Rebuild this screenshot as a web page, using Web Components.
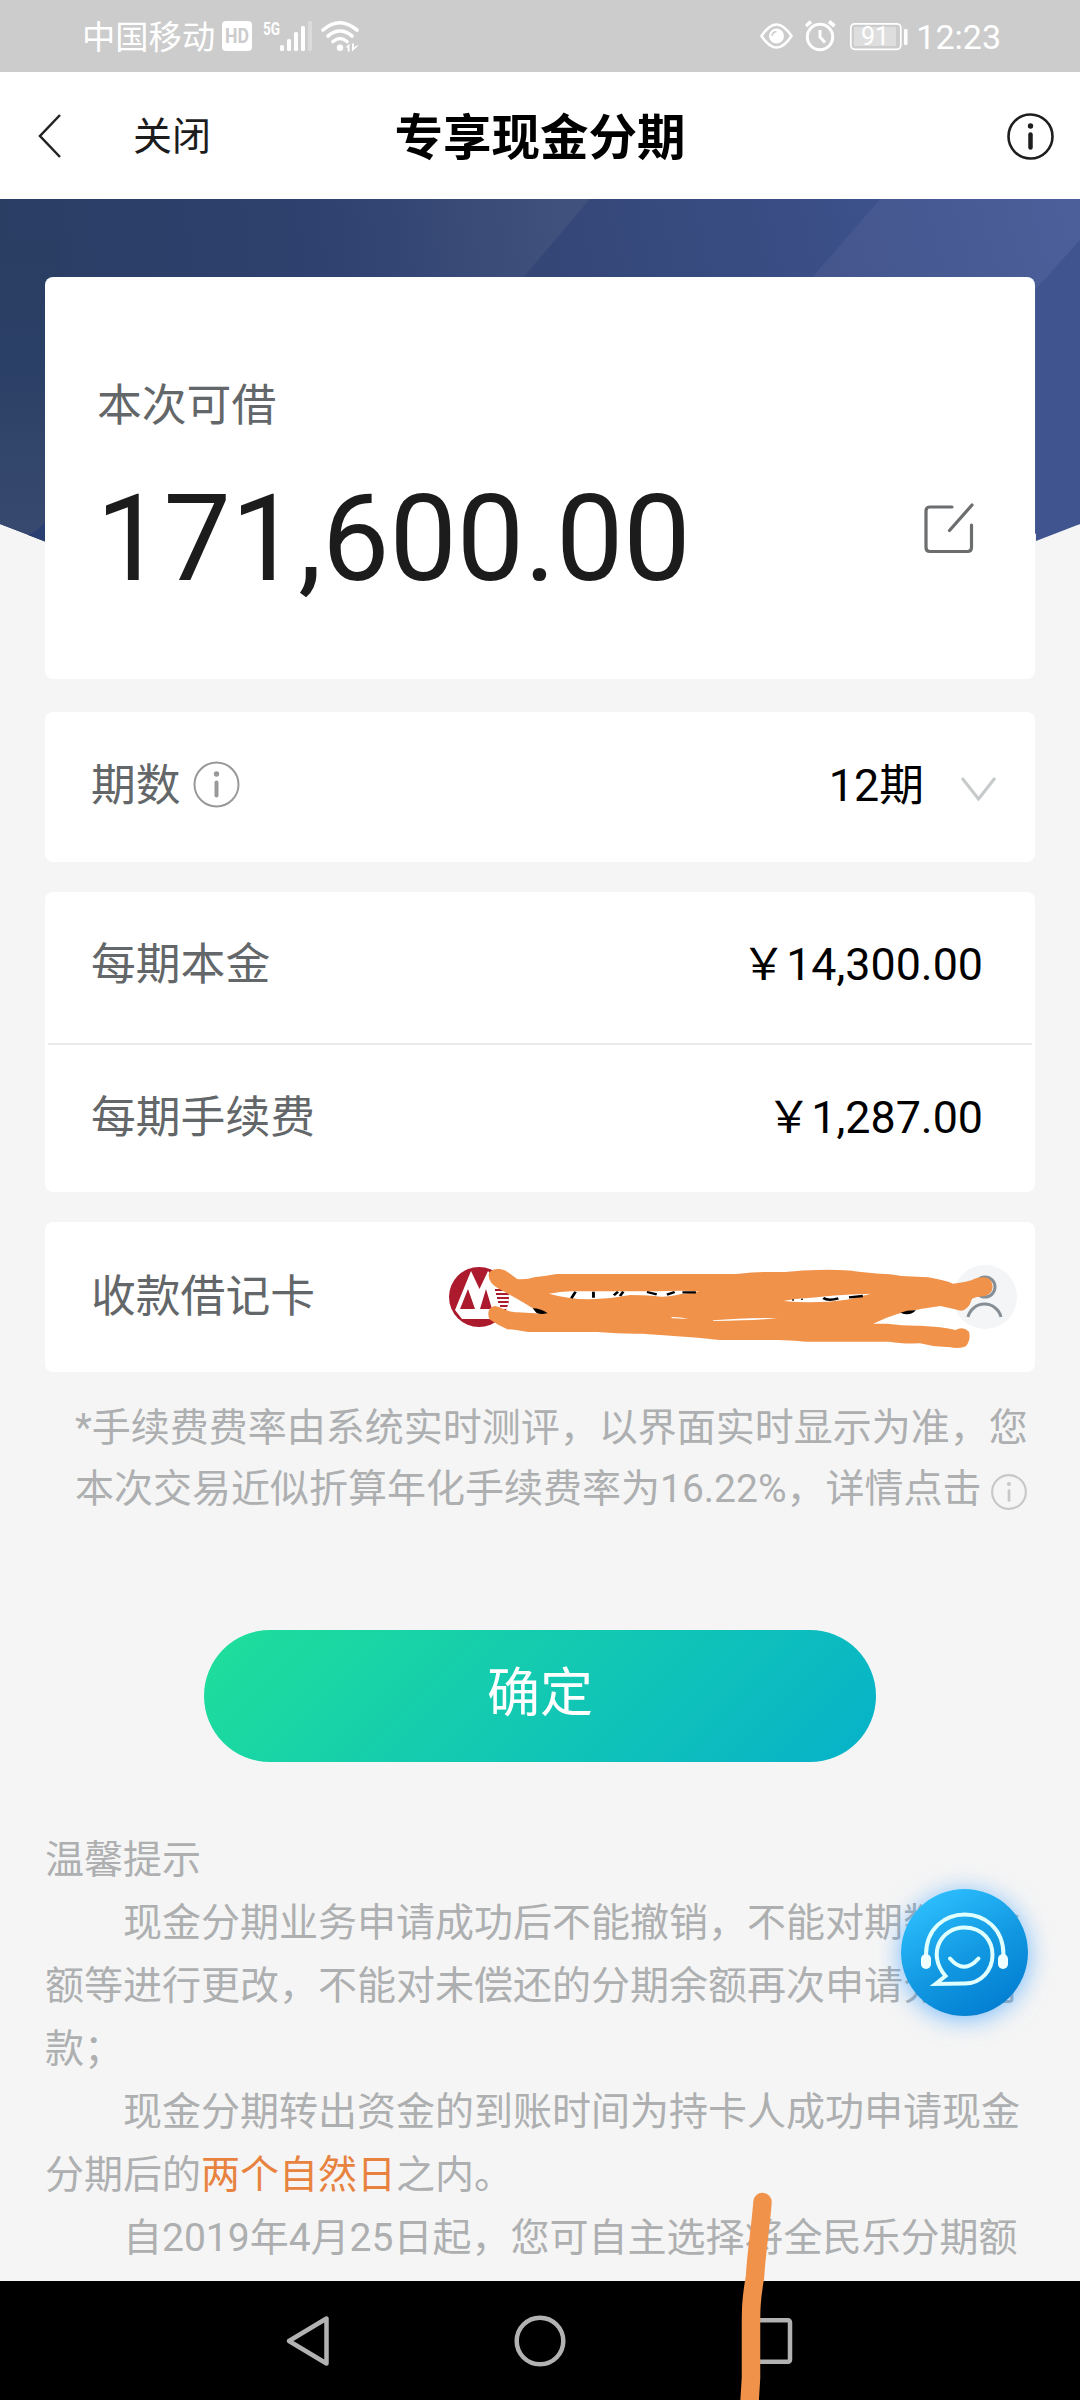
<!DOCTYPE html>
<html lang="zh-CN">
<head>
<meta charset="utf-8">
<title>专享现金分期</title>
<style>
html,body{margin:0;padding:0}
body{width:1080px;height:2400px;overflow:hidden;background:#f5f5f5;font-family:Roboto,"Noto Sans CJK SC",sans-serif;color:#000}
</style>
</head>
<body>
<loan-app></loan-app>
<script>
const define = (name, html) => {
  const t = document.createElement('template');
  t.innerHTML = html;
  customElements.define(name, class extends HTMLElement {
    constructor() {
      super();
      this.attachShadow({ mode: 'open' }).appendChild(t.content.cloneNode(true));
    }
  });
};

define('status-bar', `
<style>
:host{display:flex;box-sizing:border-box;height:72px;background:#ccc;color:#fff;align-items:center;justify-content:space-between;padding:0 79px 0 82px;flex:none}
div{display:flex;align-items:center}
svg{display:block;flex:none}
.carrier{font-size:33.300px;line-height:48px;white-space:nowrap;width:140px;padding-top:4px}
.time{font-size:34px;line-height:48px;margin-left:6px;padding-top:2px}
text{font-family:Roboto,sans-serif}
</style>
<div>
  <span class="carrier">中国移动</span>
  <svg width="140" height="72" viewBox="222 0 140 72" fill="#fff">
    <rect x="222" y="21" width="30" height="30" rx="4"/>
    <text x="225" y="43" font-size="20" font-weight="700" fill="#ccc" textLength="24" lengthAdjust="spacingAndGlyphs">HD</text>
    <text x="263" y="35" font-size="19" font-weight="700" textLength="17" lengthAdjust="spacingAndGlyphs">5G</text>
    <rect x="280" y="45" width="4" height="6" rx="1.500"/><rect x="287" y="39" width="4" height="12" rx="1.500"/>
    <rect x="294" y="32" width="4" height="19" rx="1.500"/><rect x="301" y="26" width="4" height="25" rx="1.500"/>
    <rect x="308" y="21" width="4" height="30" rx="1" opacity=".3"/>
    <g fill="none" stroke="#fff" stroke-width="3.600" stroke-linecap="round"><path d="M323 30Q339.500 15.500 357 30M328 36Q340 26 352 36M333 41.500Q340 35.500 347 41.500"/></g>
    <circle cx="340" cy="47.800" r="3.200"/>
    <path d="M345.500 47.500l4-4v8h-1.800v-4zM352 43.500v8l6.500-6h-2l-2.500 2v-4z"/>
  </svg>
</div>
<div>
  <svg width="150" height="72" viewBox="759 0 150 72" fill="none" stroke="#fff" stroke-width="2.500">
    <path d="M760.500 36Q768 24.500 775.500 24.500T790.500 36Q783 47.500 775.500 47.500T760.500 36Z"/>
    <circle cx="775.500" cy="36" r="7.500" fill="#fff" stroke="none"/><path d="M771 36q.5-4 4.500-4.500" stroke="#ccc" stroke-width="1.500"/>
    <circle cx="819" cy="37" r="12.700" stroke-width="3"/><path d="M819 30v7l5 5.500" stroke-width="3"/>
    <path d="M805 26l5-4.500M828 21.500l5.500 4.500" stroke-width="3.600"/>
    <rect x="849.800" y="23.800" width="50" height="25.500" rx="4" stroke-width="1.700"/>
    <rect x="853" y="27" width="42" height="19" fill="#dedede" stroke="none"/>
    <rect x="903" y="29" width="3.500" height="16" rx="1" fill="#fff" stroke="none"/>
    <text x="860" y="45.300" font-size="25" fill="#fff" stroke="none" textLength="28">91</text>
  </svg>
  <span class="time">12:23</span>
</div>`);

define('info-icon', `
<style>
:host{display:inline-block;width:var(--size,47px);height:var(--size,47px);color:#999;flex:none}
svg{display:block;width:100%;height:100%}
.ring{stroke-width:var(--ring,2)}
.stem{stroke-width:var(--stem,4)}
</style>
<svg viewBox="0 0 47 47"><circle class="ring" cx="23.500" cy="23.500" r="22" fill="none" stroke="currentColor"/>
<circle cx="23.500" cy="13" r="2.700" fill="currentColor"/><path class="stem" d="M23.500 21.500v13" stroke="currentColor" stroke-linecap="round"/></svg>`);

define('title-bar', `
<style>
:host{display:grid;grid-template-columns:1fr auto 1fr;align-items:center;box-sizing:border-box;height:127px;background:#fff;padding:0 26px 0 38px;flex:none}
.left{display:flex;align-items:center}
svg{display:block}
.close{font-size:39px;line-height:56px;margin-left:70px;color:#1c1c1c;padding-top:3px}
h1{font-size:48.500px;line-height:70px;font-weight:700;margin:0;white-space:nowrap;padding:6px 12px 0 0}
info-icon{justify-self:end;color:#1e1e1e;--ring:2.600;--stem:4.500;margin-top:2px}
</style>
<div class="left"><svg width="25" height="46" viewBox="0 0 25 46"><path d="M22 2L2 23L22 44" fill="none" stroke="#222" stroke-width="2.500"/></svg><span class="close">关闭</span></div>
<h1><slot></slot></h1><info-icon></info-icon>`);

define('hero-panel', `
<style>
:host{display:block;position:relative;padding:78px 45px 0;flex:none}
svg{position:absolute;left:0;top:0;width:1080px;height:440px}
.card{position:relative;box-sizing:border-box;height:402px;background:#fff;border-radius:8px;padding:96px 61px 0 52px;display:flex;flex-direction:column}
.label{font-size:44.800px;line-height:66px;color:#636769}
.row{display:flex;align-items:center;justify-content:space-between;margin-top:29px}
.amount{font-size:120px;line-height:142px;color:#1c1c1c;white-space:nowrap;margin-left:-1px}
.edit{position:static;width:50px;height:51px;margin-top:-22px}
</style>
<svg viewBox="0 0 1080 440">
  <defs>
    <linearGradient id="a" gradientUnits="userSpaceOnUse" x1="0" x2="560" y1="60" y2="0"><stop offset="0" stop-color="#2a3d63"/><stop offset=".6" stop-color="#2f4270"/><stop offset="1" stop-color="#41517d"/></linearGradient>
    <linearGradient id="b" gradientUnits="userSpaceOnUse" x1="540" x2="860" y1="70" y2="0"><stop offset="0" stop-color="#344676"/><stop offset="1" stop-color="#3c5089"/></linearGradient>
    <linearGradient id="c" gradientUnits="userSpaceOnUse" x1="830" x2="1080" y1="70" y2="0"><stop offset="0" stop-color="#44568c"/><stop offset="1" stop-color="#4c5f9b"/></linearGradient>
    <linearGradient id="d" x2="0" y2="1"><stop offset="0" stop-color="#2a3d63"/><stop offset=".4" stop-color="#2b4066"/><stop offset="1" stop-color="#394a70"/></linearGradient>
  </defs>
  <path d="M0 0H600L300 440L0 325Z" fill="url(#a)"/>
  <path d="M0 40H60V348L0 325Z" fill="url(#d)"/>
  <path d="M28 336Q38 332 46 322V343Z" fill="#293f72"/>
  <path d="M590 0H890L500 440L300 340Z" fill="url(#b)"/>
  <path d="M880 0H1080V325L600 430L500 440Z" fill="url(#c)"/>
  <path d="M1080 41L1036 90V342L1080 325Z" fill="#40548f"/>
</svg>
<div class="card"><span class="label">本次可借</span>
<div class="row"><span class="amount">171,600.00</span>
<svg class="edit" viewBox="0 0 50 51" fill="none" stroke="#6b6d6e" stroke-width="3.200" stroke-linecap="round"><path d="M28 4H6Q2 4 2 8V44.500Q2 48.500 6 48.500H43.500Q47.500 48.500 47.500 44.500V22M48 2L25.500 27.500"/></svg>
</div></div>`);

define('card-box', `
<style>:host{display:block;position:relative;background:#fff;border-radius:8px;margin:0 45px;flex:none}</style><slot></slot>`);

define('detail-row', `
<style>
:host{display:flex;box-sizing:border-box;height:150px;align-items:center;justify-content:space-between;padding:0 52px 3px 46px;font-size:44.800px;line-height:66px}
.label{display:flex;align-items:center;color:#636769;gap:12px}
.value{display:flex;align-items:center;color:#000;white-space:nowrap}
</style>
<span class="label"><slot name="label"></slot></span><span class="value"><slot></slot></span>`);

define('bank-account', `
<style>
:host{display:flex;align-items:center;justify-content:space-between;width:568px}
svg{display:block}
.ink{position:absolute;left:375px;top:-2px}
</style>
<svg width="60" height="60" viewBox="0 0 60 60"><defs><clipPath id="disc"><circle cx="30" cy="30" r="30"/></clipPath></defs><g clip-path="url(#disc)"><path d="M0 0H60V60H0Z" fill="#ab1a2d"/>
<path d="M6 43L22 4L30.500 22L39 4L62 30V52H13Z" fill="#fff"/>
<path d="M11 42L19 22L26 42ZM31 42L37 22L43 42Z" fill="#ab1a2d"/>
<path d="M46 23H60M47 27H60M48 31H60M49 35H60M51 39H60M53 43H58" stroke="#ab1a2d" stroke-width="1.800"/></g></svg>
<svg width="64" height="64" viewBox="0 0 64 64"><circle cx="32" cy="32" r="32" fill="#f3f5f7"/><g fill="none" stroke="#878f96" stroke-width="3"><circle cx="32" cy="22" r="10"/><path d="M15 52A17 17 0 0 1 48 52"/></g></svg>
<svg class="ink" width="640" height="160" viewBox="0 0 1568 480" preserveAspectRatio="none">
  <path fill="#f1924a" fill-rule="evenodd" d="M168 165C170 145 195 143 210 152L238 177Q260 180 280 172Q310 168 335 162H775Q820 156 850 156H895Q940 150 975 150Q1035 148 1075 155L1125 161Q1160 162 1180 168L1245 172Q1285 180 1306 191Q1340 188 1362 175Q1392 165 1400 185Q1410 215 1385 228Q1360 230 1352 237Q1345 270 1325 272Q1295 263 1275 258Q1240 264 1218 269Q1170 275 1110 311H1145Q1185 318 1225 317Q1280 320 1312 330Q1330 318 1345 335Q1350 360 1338 378Q1325 388 1295 381Q1260 382 1225 370Q1180 372 1150 365H945Q900 359 865 360H735Q710 357 665 352Q590 345 545 341Q490 342 435 336H265Q230 329 214 328Q190 315 170 298C163 275 170 260 185 258C205 265 215 277 240 277L312 282L278 266Q230 230 195 208Q168 190 168 165ZM316 221Q345 215 370 214H560Q650 210 685 214Q665 220 640 222Q600 234 575 228Q540 225 515 225Q475 235 430 237Q370 240 316 221ZM890 243Q920 235 950 234Q1045 222 1105 221Q1060 235 1045 239Q970 252 890 243ZM615 291Q640 291 658 297L618 295ZM718 301Q790 292 875 294Q830 302 718 303Z"/>
  <g fill="none" stroke="#000" stroke-width="7"><path d="M371 235L381 215M425 215V233M475 226L485 215M490 228L498 215M556 216L580 223M605 224L624 216M643 217H676"/><path d="M988 234Q1000 244 1025 235M1051 232L1085 228"/><path d="M912 240h4M934 238h4" stroke-width="4"/></g>
  <path d="M276 265Q295 265 313 280Q295 285 285 278ZM1177 278Q1195 270 1215 271Q1200 291 1177 278Z"/>
</svg>`);

define('fee-note', `
<style>
:host{display:block;margin:26px 0 0 75px;font-size:39px;line-height:61px;color:#adafb0;white-space:nowrap;flex:none;height:122px}
div{display:flex;align-items:center}
info-icon{--size:36px;--ring:2.800;--stem:3.500;color:#c8c8c8;margin:4px 0 0 9px}
</style>
<div>*手续费费率由系统实时测评，以界面实时显示为准，您</div>
<div>本次交易近似折算年化手续费率为16.22%，详情点击<info-icon></info-icon></div>`);

define('primary-button', `
<style>
:host{display:block;flex:none;align-self:center;margin-top:110px}
button{display:flex;align-items:center;justify-content:center;width:672px;height:132px;border:0;border-radius:66px;padding:0 0 15px;background:linear-gradient(135deg,#1fdf9a,#06b2ca);color:#fff;font:inherit;font-size:53px}
</style><button><slot></slot></button>`);

define('tips-text', `
<style>
:host{display:block;margin:67px 40px 0 45px;font-size:39px;line-height:63px;color:#adafb0;white-space:nowrap;flex:none}
p{margin:0}.in{text-indent:78px}em{font-style:normal;color:#e8833f}
</style>
<p>温馨提示</p>
<p class="in">现金分期业务申请成功后不能撤销，不能对期数、金<br>额等进行更改，不能对未偿还的分期余额再次申请分期付<br>款；</p>
<p class="in">现金分期转出资金的到账时间为持卡人成功申请现金<br>分期后的<em>两个自然日</em>之内。</p>
<p class="in">自2019年4月25日起，您可自主选择将全民乐分期额</p>`);

define('service-fab', `
<style>
:host{display:block;position:absolute;left:901px;top:1889px;width:127px;height:127px;border-radius:50%;background:linear-gradient(150deg,#2fc1ff 8%,#1299e2 52%,#0079cf 95%);box-shadow:0 3px 24px rgba(50,155,255,.65)}
svg{display:block}
</style>
<svg width="127" height="127" viewBox="901 1889 127 127" fill="none" stroke="#e0ffff" stroke-width="4" stroke-linecap="round"><path d="M926 1955C926 1901 1003.500 1901 1003.500 1955"/><path d="M935.500 1984L945.500 1976C926 1953 942 1927.500 964 1927.500C984 1927.500 992.500 1942 992.500 1955C992.500 1970 981 1984 964 1983.500Z" stroke-linecap="butt"/><path d="M950 1958.500Q964 1975 978.500 1958.500"/><g fill="#f0ffff" stroke="none"><rect x="921" y="1954" width="10" height="15" rx="5"/><rect x="998" y="1954" width="10" height="15" rx="5"/></g></svg>`);

define('system-nav', `
<style>
:host{display:flex;height:119px;background:#000;flex:none;align-items:center;justify-content:center;gap:182px;box-sizing:border-box}
svg{display:block}
</style>
<svg width="48" height="54" viewBox="0 0 48 54"><path d="M42.500 4.500V49.500L5 27Z" fill="none" stroke="#b2b2b2" stroke-width="4.500" stroke-linejoin="round"/></svg>
<svg width="52" height="52" viewBox="0 0 52 52"><circle cx="26" cy="26" r="23.300" fill="none" stroke="#b2b2b2" stroke-width="4.500"/></svg>
<svg width="48" height="48" viewBox="0 0 48 48"><rect x="1" y="3.200" width="41" height="41.500" rx="2" fill="none" stroke="#b2b2b2" stroke-width="4.500"/></svg>`);

define('ink-stroke', `
<style>:host{display:block;position:absolute;left:730px;top:2180px}svg{display:block}</style>
<svg width="60" height="220" viewBox="730 2180 60 220"><path d="M762.500 2202C761 2225 756.500 2250 755 2277C751 2300 751 2310 751 2325V2378L749 2410" fill="none" stroke="#f1924a" stroke-width="18.500" stroke-linecap="round"/></svg>`);

define('loan-app', `
<style>
:host{display:flex;flex-direction:column;position:relative;width:1080px;height:2400px;overflow:hidden;background:#f5f5f5}
main{flex:1;min-height:0;overflow:hidden;display:flex;flex-direction:column}
.t{margin-top:33px}.m{margin-top:30px}
hr{border:0;height:2px;background:#ebebeb;margin:0 3px -2px}
.period{margin-top:-3px}
.chev{display:block;margin:6px -14px 0 36px}
.first{padding-bottom:5px;height:151px}
.second{padding-bottom:0;height:149px}
.acct{padding:0 18px 0 46px}
</style>
<status-bar></status-bar>
<title-bar>专享现金分期</title-bar>
<main>
  <hero-panel></hero-panel>
  <card-box class="t"><detail-row><span slot="label">期数</span><info-icon class="period" slot="label"></info-icon>12期<svg class="chev" width="37" height="26" viewBox="0 0 37 26"><path d="M2 2L18.500 23L35 2" fill="none" stroke="#c6cacb" stroke-width="3"/></svg></detail-row></card-box>
  <card-box class="m"><detail-row class="first"><span slot="label">每期本金</span>￥14,300.00</detail-row><hr><detail-row class="second"><span slot="label">每期手续费</span>￥1,287.00</detail-row></card-box>
  <card-box class="m"><detail-row class="acct"><span slot="label">收款借记卡</span><bank-account></bank-account></detail-row></card-box>
  <fee-note></fee-note>
  <primary-button>确定</primary-button>
  <tips-text></tips-text>
</main>
<service-fab></service-fab>
<system-nav></system-nav>
<ink-stroke></ink-stroke>`);
</script>
</body>
</html>
